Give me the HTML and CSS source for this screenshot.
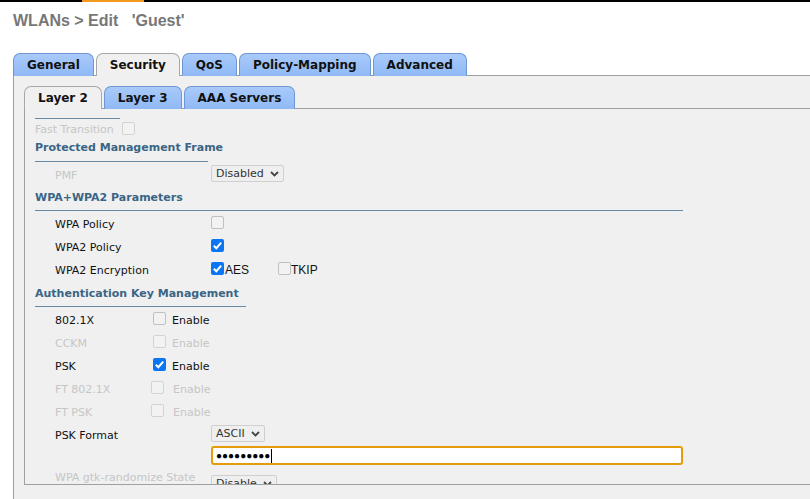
FILE: index.html
```html
<!DOCTYPE html>
<html>
<head>
<meta charset="utf-8">
<title>WLANs &gt; Edit 'Guest'</title>
<link rel="stylesheet" href="styles.css">
</head>
<body>
<div class="topbar"><span class="seg-black"></span><span class="seg-orange"></span><span class="seg-rest"></span></div>
<h1 class="title">WLANs &gt; Edit   'Guest'</h1>

<div class="tabs outer-tabs">
  <div class="tab">General</div>
  <div class="tab active">Security</div>
  <div class="tab">QoS</div>
  <div class="tab">Policy-Mapping</div>
  <div class="tab">Advanced</div>
</div>

<div class="panel outer-panel">
  <div class="tabs inner-tabs">
    <div class="tab active">Layer 2</div>
    <div class="tab">Layer 3</div>
    <div class="tab">AAA Servers</div>
  </div>

  <div class="panel inner-panel">
    <div class="form">
      <div class="rule-stub"></div>
      <div class="row row-ft"><span class="lbl-ft disabled">Fast Transition</span><span class="cb cb-disabled"></span></div>

      <div class="section s-pmf">Protected Management Frame</div>
      <div class="row"><span class="lbl disabled">PMF</span><div class="sel">Disabled<svg class="chev" width="9" height="6" viewBox="0 0 9 6"><polyline points="1,1 4.5,4.5 8,1" fill="none" stroke="#444" stroke-width="1.8"/></svg></div></div>

      <div class="section s-wpa">WPA+WPA2 Parameters</div>
      <div class="row"><span class="lbl">WPA Policy</span><span class="cb"></span></div>
      <div class="row"><span class="lbl">WPA2 Policy</span><span class="cb cb-on"><svg width="13" height="13" viewBox="0 0 13 13"><polyline points="2.8,6.8 5.3,9.2 10.2,3.6" fill="none" stroke="#fff" stroke-width="2"/></svg></span></div>
      <div class="row"><span class="lbl">WPA2 Encryption</span><span class="cb cb-on"><svg width="13" height="13" viewBox="0 0 13 13"><polyline points="2.8,6.8 5.3,9.2 10.2,3.6" fill="none" stroke="#fff" stroke-width="2"/></svg></span><span class="opt opt-aes">AES</span><span class="cb"></span><span class="opt">TKIP</span></div>

      <div class="section s-akm">Authentication Key Management</div>
      <div class="row"><span class="lbl lbl-akm">802.1X</span><span class="cb"></span><span class="enable">Enable</span></div>
      <div class="row"><span class="lbl lbl-akm disabled">CCKM</span><span class="cb cb-disabled"></span><span class="enable disabled">Enable</span></div>
      <div class="row"><span class="lbl lbl-akm">PSK</span><span class="cb cb-on"><svg width="13" height="13" viewBox="0 0 13 13"><polyline points="2.8,6.8 5.3,9.2 10.2,3.6" fill="none" stroke="#fff" stroke-width="2"/></svg></span><span class="enable">Enable</span></div>
      <div class="row"><span class="lbl lbl-ftrow disabled">FT 802.1X</span><span class="cb cb-disabled"></span><span class="enable enable-ft disabled">Enable</span></div>
      <div class="row"><span class="lbl lbl-ftrow disabled">FT PSK</span><span class="cb cb-disabled"></span><span class="enable enable-ft disabled">Enable</span></div>
      <div class="row"><span class="lbl">PSK Format</span><div class="sel">ASCII<svg class="chev" width="9" height="6" viewBox="0 0 9 6"><polyline points="1,1 4.5,4.5 8,1" fill="none" stroke="#444" stroke-width="1.8"/></svg></div></div>
      <div class="row row-pw"><span class="lbl"></span><div class="pw"><span class="dots">●●●●●●●●●</span><span class="caret"></span></div></div>
      <div class="row row-gtk"><span class="lbl disabled">WPA gtk-randomize State</span><div class="sel">Disable<svg class="chev" width="9" height="6" viewBox="0 0 9 6"><polyline points="1,1 4.5,4.5 8,1" fill="none" stroke="#444" stroke-width="1.8"/></svg></div></div>
    </div>
  </div>
</div>
</body>
</html>
```

FILE: styles.css
```css
* { box-sizing: border-box; }
html, body { margin: 0; padding: 0; }
body {
  background: #fff;
  width: 810px;
  height: 499px;
  overflow: hidden;
  font-family: "DejaVu Sans", Verdana, sans-serif;
  font-size: 11px;
  color: #111;
}

.topbar { display: flex; height: 2px; }
.seg-black { width: 82px; background: #000; }
.seg-orange { width: 62px; background: #f39a1e; }
.seg-rest { flex: 1; background: #000; }

.title {
  margin: 10px 0 0 13px;
  font: bold 16px/18px "Liberation Sans", Arial, sans-serif;
  color: #777;
  white-space: pre;
}

.tabs { display: flex; gap: 2px; position: relative; z-index: 1; }
.outer-tabs { margin: 23px 0 0 13px; }

.tab {
  height: 23px;
  padding: 0 13px;
  border: 1px solid #6f97d3;
  border-bottom: none;
  border-radius: 7px 7px 0 0;
  background: linear-gradient(#a9cafa, #8fb9f5);
  font: bold 12px/23px "DejaVu Sans", Verdana, sans-serif;
  color: #111;
}
.tab.active { background: #f0f0f0; border-color: #a8a8a8; }

.panel { background: #f0f0f0; border: 1px solid #a0a0a0; }
.outer-panel {
  margin: -1px -20px 0 13px;
  padding: 10px 0 0 10px;
  height: 500px;
}
.inner-panel {
  margin-top: -1px;
  height: 377px;
  overflow: hidden;
  padding: 9px 0 0 10px;
}

.rule-stub { width: 85px; border-top: 1px solid #6a8aa3; }

.row {
  display: flex;
  align-items: center;
  height: 23px;
  padding-left: 20px;
  line-height: 13px;
}
.row-ft { height: 18px; padding-left: 0; }
.lbl-ft { margin-right: 8px; }

.lbl, .lbl-ft, .enable, .opt { padding-top: 3px; }

.lbl { width: 156px; flex: none; white-space: nowrap; }
.lbl-akm { width: 98px; }
.lbl-ftrow { width: 96px; }

.disabled { color: #c6c6c6; }

.section {
  font-weight: bold;
  color: #3a6584;
  border-bottom: 1px solid #6a8aa3;
  line-height: 13px;
  white-space: nowrap;
}
.s-pmf { width: 173px; height: 25px; padding-top: 4px; }
.s-wpa { width: 648px; height: 26px; padding-top: 6px; }
.s-akm { width: 211px; height: 27px; padding-top: 7px; }

.cb {
  width: 13px;
  height: 13px;
  flex: none;
  border: 1px solid #c0c0c0;
  border-radius: 2px;
  background: #f2f2f2;
}
.cb-disabled { border-color: #d3d3d3; }
.cb-on { border: none; background: #0a75f5; }
.cb-on svg { display: block; }

.opt { font: 12px/13px "Liberation Sans", Arial, sans-serif; color: #111; padding-top: 3px; }
.opt-aes { margin: 0 29px 0 1px; }

.enable { margin-left: 6px; }
.enable-ft { margin-left: 9px; }

.sel {
  display: inline-flex;
  align-items: center;
  height: 17px;
  padding: 0 4px;
  border: 1px solid #cfcfcf;
  border-radius: 2px;
  background: #efefef;
  color: #333;
}
.chev { margin-left: 6px; }

.row-pw { height: 25px; align-items: flex-start; }
.pw {
  margin-top: 1px;
  width: 472px;
  height: 19px;
  border: 2px solid #e59c0a;
  border-radius: 3px;
  background: #fff;
  display: flex;
  align-items: center;
  padding-left: 3px;
}
.dots { font: 10px/13px "Liberation Sans", Arial, sans-serif; color: #000; }
.caret { width: 1px; height: 14px; background: #000; margin-left: 1px; }

.row-gtk { align-items: flex-start; }
.row-gtk .lbl { padding-top: 1px; }
.row-gtk .sel { margin-top: 5px; }
```
